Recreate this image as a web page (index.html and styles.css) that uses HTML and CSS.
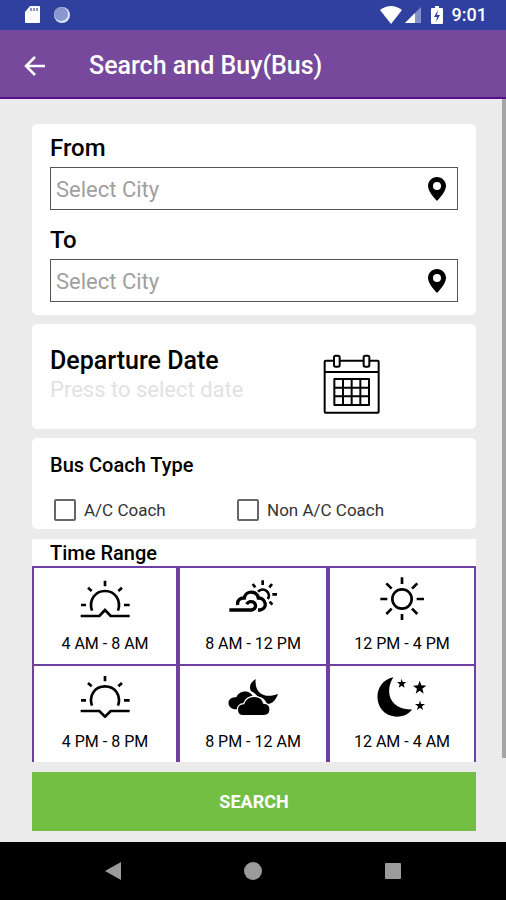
FILE: index.html
```html
<!DOCTYPE html>
<html lang="en">
<head>
<meta charset="utf-8">
<meta name="viewport" content="width=device-width, initial-scale=1">
<title>Search and Buy(Bus)</title>
<link rel="stylesheet" href="styles.css">
</head>
<body>
<div class="status-bar">
  <div class="status-group">
    <svg width="17" height="20" viewBox="0 0 17 20"><path d="M6 1h9q1 0 1 1v15q0 1-1 1H2q-1 0-1-1V7z" fill="#fff"/><path d="M7 3v3M10 3v3M13 3v3" stroke="#8d93c4" stroke-width="2"/></svg>
    <svg class="sync" width="18" height="20" viewBox="0 0 18 20"><circle cx="9" cy="10" r="8" fill="#dde2f5"/><circle cx="8" cy="9" r="7" fill="#8b97cf"/></svg>
  </div>
  <div class="status-group">
    <svg width="22" height="20" viewBox="0 0 22 20"><path d="M0 5Q11-3 22 5L11 19z" fill="#fff"/></svg>
    <svg class="signal" width="18" height="20" viewBox="0 0 18 20"><path d="M17 2v16H1z" fill="#8290c8"/><path d="M11 8v10H1z" fill="#fff"/></svg>
    <svg class="battery" width="12" height="20" viewBox="0 0 12 20"><path d="M4 1h4v2h3q1 0 1 1v14q0 1-1 1H1q-1 0-1-1V4q0-1 1-1h3z" fill="#fff"/><path d="M7 5l-4 7h3l-1 5 4-7H6z" fill="#2f409f"/></svg>
    <span class="clock">9:01</span>
  </div>
</div>
<header class="app-bar">
  <button class="back" aria-label="Back"><svg width="22" height="20" viewBox="0 0 22 20" fill="none" stroke="#fff" stroke-width="2.500"><path d="M21 10H2M11 1l-9 9 9 9"/></svg></button>
  <h1>Search and Buy(Bus)</h1>
</header>
<main>
  <section class="card route">
    <label for="from">From</label>
    <div class="field">
      <input id="from" type="text" placeholder="Select City">
      <svg width="18" height="24" viewBox="0 0 18 24"><path fill-rule="evenodd" d="M9 0C4 0 0 4 0 9c0 6 9 15 9 15s9-9 9-15c0-5-4-9-9-9zm0 5a4 4 0 1 1 0 8 4 4 0 0 1 0-8z"/></svg>
    </div>
    <label for="to">To</label>
    <div class="field">
      <input id="to" type="text" placeholder="Select City">
      <svg width="18" height="24" viewBox="0 0 18 24"><path fill-rule="evenodd" d="M9 0C4 0 0 4 0 9c0 6 9 15 9 15s9-9 9-15c0-5-4-9-9-9zm0 5a4 4 0 1 1 0 8 4 4 0 0 1 0-8z"/></svg>
    </div>
  </section>

  <button class="card date">
    <span class="date-text">
      <span class="date-title">Departure Date</span>
      <span class="date-hint">Press to select date</span>
    </span>
    <svg width="58" height="60" viewBox="68 733 174 180" fill="none" stroke="#000" stroke-width="6" stroke-linejoin="round"><rect x="73" y="753" width="162" height="156" rx="3"/><path d="M73 787h162"/><g fill="#fff"><rect x="101" y="738" width="17" height="33" rx="5"/><rect x="190" y="738" width="17" height="33" rx="5"/></g><path d="M102 808h104v78H102zM128 808v78M154 808v78M180 808v78M102 834h104M102 860h104"/></svg>
  </button>

  <section class="card coach">
    <h2>Bus Coach Type</h2>
    <div class="options">
      <label><input type="checkbox"> A/C Coach</label>
      <label><input type="checkbox"> Non A/C Coach</label>
    </div>
  </section>

  <section class="card times">
    <h2>Time Range</h2>
    <div class="slots">
      <button>
        <svg width="52" height="44" viewBox="175 108 156 132" fill="none" stroke="#000" stroke-width="8"><path d="M214 212C203 180 224 153 253 153s50 27 39 59M180 228h56l17-18 17 18h57M253 122v17M202 143l11 10M304 143l-11 10M181 195h15M310 195h17"/></svg>
        4 AM - 8 AM
      </button>
      <button>
        <svg width="52" height="44" viewBox="171 48 156 132" fill="none" stroke="#000" stroke-width="10"><path d="M178 150h67c18-4 14-28-5-25-5 1-8 4-10 8M203 135c-2-15 8-22 20-21 4-24 38-23 42 0 22-1 30 31 6 36h-7"/><path stroke-width="8" d="M264 95c17-17 42 5 29 22M278 61v14M306 72l-8 10M248 72l8 10M307 103h14M299 125l8 9"/></svg>
        8 AM - 12 PM
      </button>
      <button>
        <svg width="52" height="44" viewBox="168 138 156 132" fill="none" stroke="#000" stroke-width="8"><circle cx="246" cy="207" r="29"/><path d="M246 142v20M246 252v18M181 207h21M290 207h22M199 160l16 16M292 160l-16 16M199 252l16-16M292 252l-16-16"/></svg>
        12 PM - 4 PM
      </button>
      <button>
        <svg width="52" height="44" viewBox="175 42 156 132" fill="none" stroke="#000" stroke-width="8"><path d="M214 137C203 105 224 79 253 79s50 26 39 58M180 153h56l17 17 17-17h57M253 48v16M202 69l11 10M304 69l-11 10M181 121h15M310 121h17"/></svg>
        4 PM - 8 PM
      </button>
      <button>
        <svg width="52" height="44" viewBox="51 42 156 132"><path d="M137 57C118 68 117 84 124 94q15 8 19 16 20 0 27 21c16 2 28-11 34-30-34 16-72 2-67-44z"/><path d="M72 148c-25-6-21-39 7-36 8-22 42-25 51 0l-35 36z"/><path d="M99 167c-22-1-24-35 2-36 10-29 53-29 60-2 26 1 25 37 1 38z" stroke="#fff" stroke-width="4"/></svg>
        8 PM - 12 AM
      </button>
      <button>
        <svg width="52" height="44" viewBox="498 42 156 132"><path d="M550 52C484 64 486 167 560 170c22 0 38-8 46-22-61 3-86-47-56-96z"/><path d="M629 62l5 14 15 1-12 9 4 15-12-9-12 9 4-15-12-9 15-1z"/><path d="M575 56l3 10h11l-8 7 3 10-9-6-9 6 3-10-8-7h11zM630 121l3 11h12l-9 7 3 11-9-7-9 7 3-11-9-7h12z"/></svg>
        12 AM - 4 AM
      </button>
    </div>
  </section>

  <button class="search">SEARCH</button>
  <div class="scroll-thumb"></div>
</main>
<nav class="nav-bar">
  <button aria-label="Back"><svg width="18" height="18" viewBox="0 0 18 18"><path d="M17 0v18L1 9z"/></svg></button>
  <button aria-label="Home"><svg width="18" height="18" viewBox="0 0 18 18"><circle cx="9" cy="9" r="9"/></svg></button>
  <button aria-label="Recent apps"><svg width="18" height="18" viewBox="0 0 18 18"><rect x="1" y="1" width="16" height="16" rx="1"/></svg></button>
</nav>
</body>
</html>
```
FILE: styles.css
```css
* { box-sizing: border-box; }

body {
  margin: 0;
  min-height: 100vh;
  display: flex;
  flex-direction: column;
  background: #ebebeb;
  color: #000;
  font-family: Roboto, "Liberation Sans", sans-serif;
}

button, input { font: inherit; color: inherit; }
button { border: 0; padding: 0; background: none; cursor: pointer; }
svg { display: block; flex: none; }
h1, h2 { margin: 0; font-weight: 500; }

.status-bar {
  height: 30px;
  padding: 0 19px 0 24px;
  display: flex;
  justify-content: space-between;
  align-items: center;
  background: #2f409f;
  color: #fff;
}
.status-group { display: flex; align-items: center; }
.sync { margin-left: 12px; }
.signal { margin-left: 2px; }
.battery { margin-left: 9px; }
.clock { margin-left: 9px; font-size: 18px; line-height: 30px; font-weight: 500; }

.app-bar {
  height: 69px;
  padding: 4px 24px 0;
  display: flex;
  align-items: center;
  gap: 43px;
  background: #77499d;
  border-bottom: 2px solid #54108a;
  color: #fff;
}
.app-bar h1 { font-size: 25px; line-height: 32px; }

main {
  position: relative;
  flex: 1;
  padding: 25px 30px 11px 32px;
  display: flex;
  flex-direction: column;
  gap: 9px;
}

.card { background: #fff; border-radius: 5px; }

.route { padding: 8px 18px 13px; }
.route label { display: block; font-size: 24px; line-height: 32px; font-weight: 500; }
.field {
  height: 43px;
  margin: 3px 0 14px;
  padding: 0 11px 0 5px;
  display: flex;
  align-items: center;
  border: 1px solid #555;
}
.field:last-child { margin-bottom: 0; }
.field input {
  flex: 1;
  min-width: 0;
  padding: 2px 0 0;
  border: 0;
  outline: 0;
  background: none;
  font-size: 22px;
}
.field input::placeholder { color: #a0a0a0; opacity: 1; }

.date {
  min-height: 105px;
  padding: 0 95px 0 18px;
  display: flex;
  justify-content: space-between;
  align-items: center;
  text-align: left;
}
.date svg { margin-top: 14px; }
.date-text { display: flex; flex-direction: column; padding-bottom: 4px; }
.date-title { font-size: 25px; line-height: 30px; font-weight: 500; }
.date-hint { font-size: 22px; line-height: 28px; color: #e2e2e2; }

.coach { padding: 14px 18px 6px; }
h2 { font-size: 20px; line-height: 26px; }
.options {
  padding-left: 4px;
  margin-top: 19px;
  display: grid;
  grid-template-columns: 183fr 221fr;
}
.options label {
  display: flex;
  align-items: center;
  gap: 8px;
  font-size: 17px;
  line-height: 26px;
  color: #333;
}
.options input {
  appearance: none;
  width: 22px;
  height: 22px;
  margin: 0;
  border: 2px solid #666;
  border-radius: 2px;
}

.times { border-radius: 0; margin-top: 1px; }
.times h2 { padding: 1px 18px 0; }
.slots { display: grid; grid-template-columns: 146fr 150fr 148fr; }
.slots button {
  height: 98px;
  padding-top: 8px;
  display: flex;
  flex-direction: column;
  align-items: center;
  gap: 12px;
  border: 2px solid #7040a0;
  border-bottom: 0;
  font-size: 16px;
  line-height: 24px;
}

.search {
  height: 59px;
  margin-top: 1px;
  background: #72bf44;
  color: #fff;
  font-size: 18px;
  font-weight: 700;
}

.scroll-thumb {
  position: absolute;
  top: 0;
  right: 0;
  bottom: 84px;
  width: 4px;
  background: #a5a5a5;
}

.nav-bar {
  height: 58px;
  padding: 0 43px;
  display: grid;
  grid-template-columns: repeat(3, 1fr);
  place-items: center;
  background: #000;
}
.nav-bar svg { fill: #9b9b9b; }
```
